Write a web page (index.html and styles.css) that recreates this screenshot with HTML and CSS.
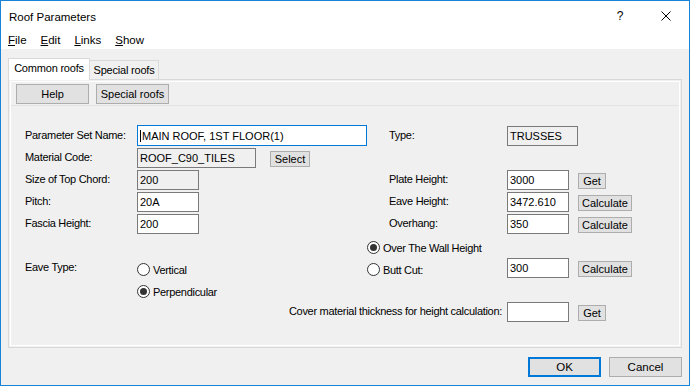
FILE: index.html
```html
<!DOCTYPE html>
<html lang="en">
<head>
    <meta charset="UTF-8">
    <title>Roof Parameters</title>
    <link rel="stylesheet" href="styles.css">
</head>
<body>

<div class="window">
    <div class="titlebar">
        <span class="title">Roof Parameters</span>
        <span class="cap-btn">?</span>
        <span class="cap-btn">
            <svg width="10" height="10" viewBox="0 0 10 10"><path d="M0.5 0.5L9.5 9.5M9.5 0.5L0.5 9.5" stroke="#000" stroke-width="1" fill="none"/></svg>
        </span>
    </div>

    <div class="menubar">
        <span class="menu-item"><u>F</u>ile</span>
        <span class="menu-item"><u>E</u>dit</span>
        <span class="menu-item"><u>L</u>inks</span>
        <span class="menu-item"><u>S</u>how</span>
    </div>

    <div class="main">
        <div class="tabs">
            <div class="tab active">Common roofs</div>
            <div class="tab">Special roofs</div>
        </div>

        <div class="panel">
            <div class="page">
                <div class="toolbar">
                    <button class="btn btn-tool">Help</button>
                    <button class="btn btn-tool">Special roofs</button>
                </div>

                <div class="form">
                    <label class="lbl c1">Parameter Set Name:</label>
                    <input class="fld fld-name span-name" type="text" value="MAIN ROOF, 1ST FLOOR(1)">
                    <label class="lbl c5">Type:</label>
                    <input class="fld ro fld-type c6" type="text" value="TRUSSES" readonly>

                    <label class="lbl c1">Material Code:</label>
                    <input class="fld ro fld-mat c2" type="text" value="ROOF_C90_TILES" readonly>
                    <button class="btn btn-sm btn-select c3">Select</button>

                    <label class="lbl c1">Size of Top Chord:</label>
                    <input class="fld ro fld-short c2" type="text" value="200" readonly>
                    <label class="lbl c5">Plate Height:</label>
                    <input class="fld fld-short c6" type="text" value="3000">
                    <button class="btn btn-sm btn-get c7">Get</button>

                    <label class="lbl c1">Pitch:</label>
                    <input class="fld fld-short c2" type="text" value="20A">
                    <label class="lbl c5">Eave Height:</label>
                    <input class="fld fld-short c6" type="text" value="3472.610">
                    <button class="btn btn-sm btn-calc c7">Calculate</button>

                    <label class="lbl c1">Fascia Height:</label>
                    <input class="fld fld-short c2" type="text" value="200">
                    <label class="lbl c5">Overhang:</label>
                    <input class="fld fld-short c6" type="text" value="350">
                    <button class="btn btn-sm btn-calc c7">Calculate</button>

                    <div class="radio span-radio"><span class="dot on"></span>Over The Wall Height</div>

                    <label class="lbl c1">Eave Type:</label>
                    <div class="radio c2"><span class="dot"></span>Vertical</div>
                    <div class="radio span-radio"><span class="dot"></span>Butt Cut:</div>
                    <input class="fld fld-short c6" type="text" value="300">
                    <button class="btn btn-sm btn-calc c7">Calculate</button>

                    <div class="radio span-rest"><span class="dot on"></span>Perpendicular</div>

                    <label class="lbl lbl-cover">Cover material thickness for height calculation:</label>
                    <input class="fld fld-short c6" type="text" value="">
                    <button class="btn btn-sm btn-get c7">Get</button>
                </div>
            </div>
        </div>
    </div>

    <div class="footer">
        <button class="btn btn-dlg btn-default">OK</button>
        <button class="btn btn-dlg">Cancel</button>
    </div>
</div>

</body>
</html>
```

FILE: styles.css
```css
body {
    margin: 0;
    font-family: "Liberation Sans", Arial, sans-serif;
    font-size: 11px;
    color: #000;
    background: #fff;
}
.window {
    width: 690px;
    height: 386px;
    box-sizing: border-box;
    border: 1px solid #1883d7;
    background: #f0f0f0;
    display: flex;
    flex-direction: column;
    overflow: hidden;
}
.titlebar {
    height: 30px;
    background: #fff;
    display: flex;
    align-items: center;
    flex-shrink: 0;
}
.title {
    flex: 1;
    padding-left: 8px;
    padding-top: 2px;
    font-size: 11.5px;
}
.cap-btn {
    width: 46px;
    height: 30px;
    display: flex;
    align-items: center;
    justify-content: center;
    font-size: 12px;
}
.menubar {
    height: 18px;
    background: #fff;
    display: flex;
    align-items: center;
    flex-shrink: 0;
}
.menu-item {
    padding: 0 7px;
    font-size: 11.5px;
}
.main {
    padding: 9px 7px 0;
}
.tabs {
    display: flex;
    align-items: flex-end;
    height: 21px;
}
.tab {
    width: 69px;
    height: 19px;
    box-sizing: border-box;
    border: 1px solid #d9d9d9;
    border-bottom: none;
    border-left: none;
    background: #f0f0f0;
    line-height: 18px;
    text-align: center;
    letter-spacing: -0.2px;
}
.tab.active {
    width: 82px;
    height: 22px;
    margin-bottom: -1px;
    border-left: 1px solid #d9d9d9;
    background: #fff;
    position: relative;
    z-index: 1;
    line-height: 19px;
}
.panel {
    height: 269px;
    box-sizing: border-box;
    border: 1px solid #d9d9d9;
    padding: 1px;
}
.page {
    height: 100%;
    box-sizing: border-box;
    border: 1px solid #fff;
}
.toolbar {
    display: flex;
    gap: 7px;
    height: 24px;
    box-sizing: border-box;
    padding: 2px 0 0 5px;
    border-bottom: 1px solid #e3e3e3;
}
.btn {
    font-family: inherit;
    font-size: 11px;
    color: #000;
    background: #e1e1e1;
    border: 1px solid #adadad;
    padding: 0;
    margin: 0;
    box-sizing: border-box;
}
.btn-tool {
    width: 73px;
    height: 20px;
}
.form {
    display: grid;
    grid-template-columns: 112px 133px 97px 22px 118px 71px auto;
    grid-auto-rows: 22px;
    padding: 18px 0 0 14px;
}
.c1 { grid-column: 1; }
.c2 { grid-column: 2; }
.c3 { grid-column: 3; }
.c5 { grid-column: 5; }
.c6 { grid-column: 6; }
.c7 { grid-column: 7; }
.span-name { grid-column: 2 / span 3; }
.span-radio { grid-column: 4 / span 2; }
.span-rest { grid-column: 2 / -1; }
.lbl {
    align-self: start;
    margin-top: 2px;
    line-height: 18px;
    white-space: nowrap;
    letter-spacing: -0.3px;
}
.lbl-cover {
    grid-column: 3 / span 3;
    text-align: right;
    padding-right: 5px;
}
.fld {
    align-self: start;
    justify-self: start;
    margin: 2px 0 0;
    height: 20px;
    box-sizing: border-box;
    border: 1px solid #7a7a7a;
    background: #fff;
    padding: 0 2px;
    font-family: inherit;
    font-size: 11px;
    color: #000;
    outline: none;
}
.fld.ro {
    background: #f0f0f0;
}
.fld-name {
    width: 230px;
    height: 21px;
    margin-top: 1px;
    padding-left: 4px;
    border-color: #0078d7;
    background: #fff linear-gradient(#000, #000) no-repeat 2px 4px / 1px 12px;
}
.fld-type { width: 71px; }
.fld-mat { width: 119px; }
.fld-short { width: 62px; }
.btn-sm {
    align-self: start;
    justify-self: start;
    margin-top: 5px;
    height: 16px;
    line-height: 14px;
}
.btn-select { width: 40px; }
.btn-get { width: 28px; }
.btn-calc { width: 54px; }
.radio {
    align-self: start;
    display: flex;
    align-items: center;
    gap: 3px;
    margin-top: 7px;
    height: 13px;
    white-space: nowrap;
    letter-spacing: -0.3px;
}
.dot {
    width: 13px;
    height: 13px;
    box-sizing: border-box;
    border: 1px solid #333;
    border-radius: 50%;
    background: #fff;
    display: flex;
    align-items: center;
    justify-content: center;
}
.dot.on::after {
    content: "";
    width: 7px;
    height: 7px;
    border-radius: 50%;
    background: #333;
}
.footer {
    display: flex;
    justify-content: flex-end;
    gap: 8px;
    padding: 9px 7px 0;
}
.btn-dlg {
    width: 73px;
    height: 20px;
    font-size: 11.5px;
}
.btn-default {
    border: 2px solid #0078d7;
}
```
